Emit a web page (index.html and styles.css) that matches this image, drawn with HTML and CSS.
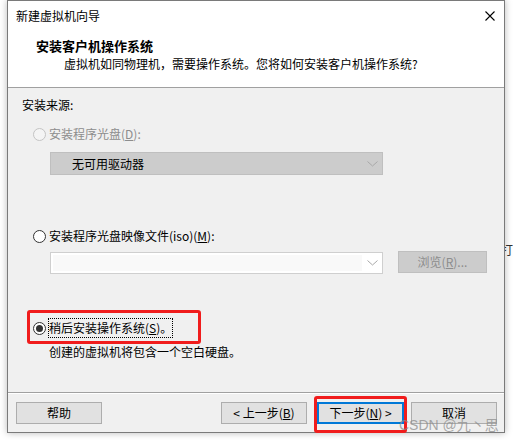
FILE: index.html
```html
<!DOCTYPE html>
<html lang="zh-CN">
<head>
<meta charset="utf-8">
<title>新建虚拟机向导</title>
<link rel="stylesheet" href="styles.css">
</head>
<body>
<div class="behind">打]</div>
<div class="window">
  <div class="titlebar">
    <span class="title">新建虚拟机向导</span>
    <svg class="close" width="10" height="10" viewBox="0 0 10 10"><path d="M0.5 0.5L9.5 9.5M9.5 0.5L0.5 9.5" stroke="#000" stroke-width="1.1" fill="none"/></svg>
  </div>
  <div class="header">
    <div class="heading">安装客户机操作系统</div>
    <div class="subtitle">虚拟机如同物理机，需要操作系统。您将如何安装客户机操作系统?</div>
  </div>
  <div class="body">
    <div class="section-label">安装来源:</div>
    <div class="radio-row disabled r1">
      <span class="radio"></span><span class="label">安装程序光盘(<u>D</u>):</span>
    </div>
    <div class="select">
      <span class="select-text">无可用驱动器</span>
      <svg class="chev" width="11" height="6" viewBox="0 0 11 6"><path d="M0.5 0.5L5.5 5L10.5 0.5" stroke="#a8a8a8" fill="none"/></svg>
    </div>
    <div class="radio-row r2">
      <span class="radio"></span><span class="label">安装程序光盘映像文件(iso)(<u>M</u>):</span>
    </div>
    <div class="file-row">
      <div class="combo">
        <div class="combo-field"></div>
        <div class="combo-btn"><svg width="11" height="6" viewBox="0 0 11 6"><path d="M0.5 0.5L5.5 5L10.5 0.5" stroke="#a8a8a8" fill="none"/></svg></div>
      </div>
      <div class="browse">浏览(<u>R</u>)...</div>
    </div>
    <div class="radio-row r3">
      <span class="radio checked"></span><span class="label focus">稍后安装操作系统(<u>S</u>)。</span>
      <div class="mark mark-radio"></div>
    </div>
    <div class="desc">创建的虚拟机将包含一个空白硬盘。</div>
  </div>
  <div class="footer">
    <div class="btn help">帮助</div>
    <div class="spacer"></div>
    <div class="btn back">&lt; 上一步(<u>B</u>)</div>
    <div class="btn next">下一步(<u>N</u>) &gt;</div>
    <div class="btn cancel">取消</div>
    <div class="mark mark-next"></div>
    <div class="watermark">CSDN @九丶思</div>
  </div>
</div>
</body>
</html>
```
FILE: styles.css
```css
html, body {
  margin: 0;
  padding: 0;
  background: #ffffff;
}
body {
  width: 513px;
  height: 440px;
  overflow: hidden;
  position: relative;
  font-family: "Noto Sans CJK SC", "Liberation Sans", sans-serif;
  font-size: 12px;
  color: #000;
}
.behind {
  position: absolute;
  left: 501px;
  top: 241px;
  font-size: 12px;
  color: #333;
}
.window {
  position: relative;
  margin-left: 7px;
  width: 496px;
  height: 431px;
  border: 1px solid #7a7a7a;
  background: #f0f0f0;
  box-shadow: 0 0 7px rgba(0, 0, 0, 0.28);
  display: flex;
  flex-direction: column;
}
.titlebar {
  height: 29px;
  background: #fff;
  display: flex;
  align-items: center;
  padding-left: 8px;
  padding-right: 9px;
}
.title {
  flex: 1;
  line-height: 18px;
}
.close {
  display: block;
}
.header {
  background: #fff;
  border-bottom: 1px solid #a0a0a0;
  padding: 7px 0 14px 28px;
}
.heading {
  font-weight: bold;
  font-size: 13px;
  line-height: 18px;
}
.subtitle {
  line-height: 18px;
  padding-left: 28px;
}
.body {
  flex: 1;
  padding: 8px 0 0 14px;
  position: relative;
}
.section-label {
  line-height: 18px;
}
.radio-row {
  position: relative;
  display: flex;
  align-items: center;
  padding-left: 11px;
  line-height: 18px;
}
.radio-row.r1 { margin-top: 11px; }
.radio-row.r2 { margin-top: 52px; }
.radio-row.r3 { margin-top: 45px; }
.radio {
  width: 11px;
  height: 11px;
  border: 1px solid #333;
  border-radius: 50%;
  background: #fff;
  margin-right: 3px;
  position: relative;
  flex: none;
}
.radio.checked::after {
  content: "";
  position: absolute;
  left: 2px;
  top: 2px;
  width: 7px;
  height: 7px;
  border-radius: 50%;
  background: #333;
}
.disabled .radio {
  border-color: #c4c4c4;
  background: #f4f4f4;
}
.disabled .label {
  color: #8d8d8d;
}
.label.focus {
  outline: 1px dotted #000;
  outline-offset: 0;
}
.select {
  margin-top: 9px;
  margin-left: 28px;
  width: 331px;
  height: 21px;
  border: 1px solid #bfbfbf;
  background: #cccccc;
  display: flex;
  align-items: center;
  padding-right: 0;
}
.select-text {
  flex: 1;
  padding-left: 21px;
}
.chev {
  margin-right: 4px;
}
.file-row {
  display: flex;
  margin-top: 7px;
  margin-left: 28px;
  align-items: flex-start;
}
.combo {
  width: 331px;
  height: 20px;
  border: 1px solid #cfcfcf;
  background: #fff;
  display: flex;
}
.combo-field {
  flex: 1;
  margin: 2px 0 2px 2px;
  background: #f9f9f9;
}
.combo-btn {
  width: 20px;
  display: flex;
  align-items: center;
  justify-content: center;
}
.browse {
  margin-left: 15px;
  margin-top: -1px;
  width: 87px;
  height: 20px;
  line-height: 20px;
  border: 1px solid #bfbfbf;
  background: #cccccc;
  color: #8d8d8d;
  text-align: center;
}
.desc {
  margin-top: 6px;
  margin-left: 27px;
  line-height: 18px;
}
.footer {
  position: relative;
  border-top: 1px solid #a0a0a0;
  box-shadow: inset 0 1px 0 #fff;
  height: 30px;
  padding: 9px 7px 0 8px;
  display: flex;
  align-items: flex-start;
}
.spacer {
  flex: 1;
}
.btn {
  width: 84px;
  height: 20px;
  line-height: 20px;
  border: 1px solid #adadad;
  background: #e1e1e1;
  text-align: center;
}
.btn.next {
  margin-left: 10px;
  width: 83px;
  height: 18px;
  line-height: 18px;
  border: 2px solid #0078d7;
}
.btn.cancel {
  margin-left: 7px;
}
.mark {
  position: absolute;
  border: 3px solid #f01c1c;
  border-radius: 3px;
}
.mark-radio {
  left: 5px;
  top: -9px;
  width: 168px;
  height: 28px;
}
.mark-next {
  left: 306px;
  top: 3px;
  width: 87px;
  height: 31px;
}
.watermark {
  position: absolute;
  left: 391px;
  top: 21px;
  font-family: "Liberation Sans", "Noto Sans CJK SC", sans-serif;
  font-size: 14px;
  color: rgba(140, 140, 140, 0.75);
  white-space: nowrap;
}
```
